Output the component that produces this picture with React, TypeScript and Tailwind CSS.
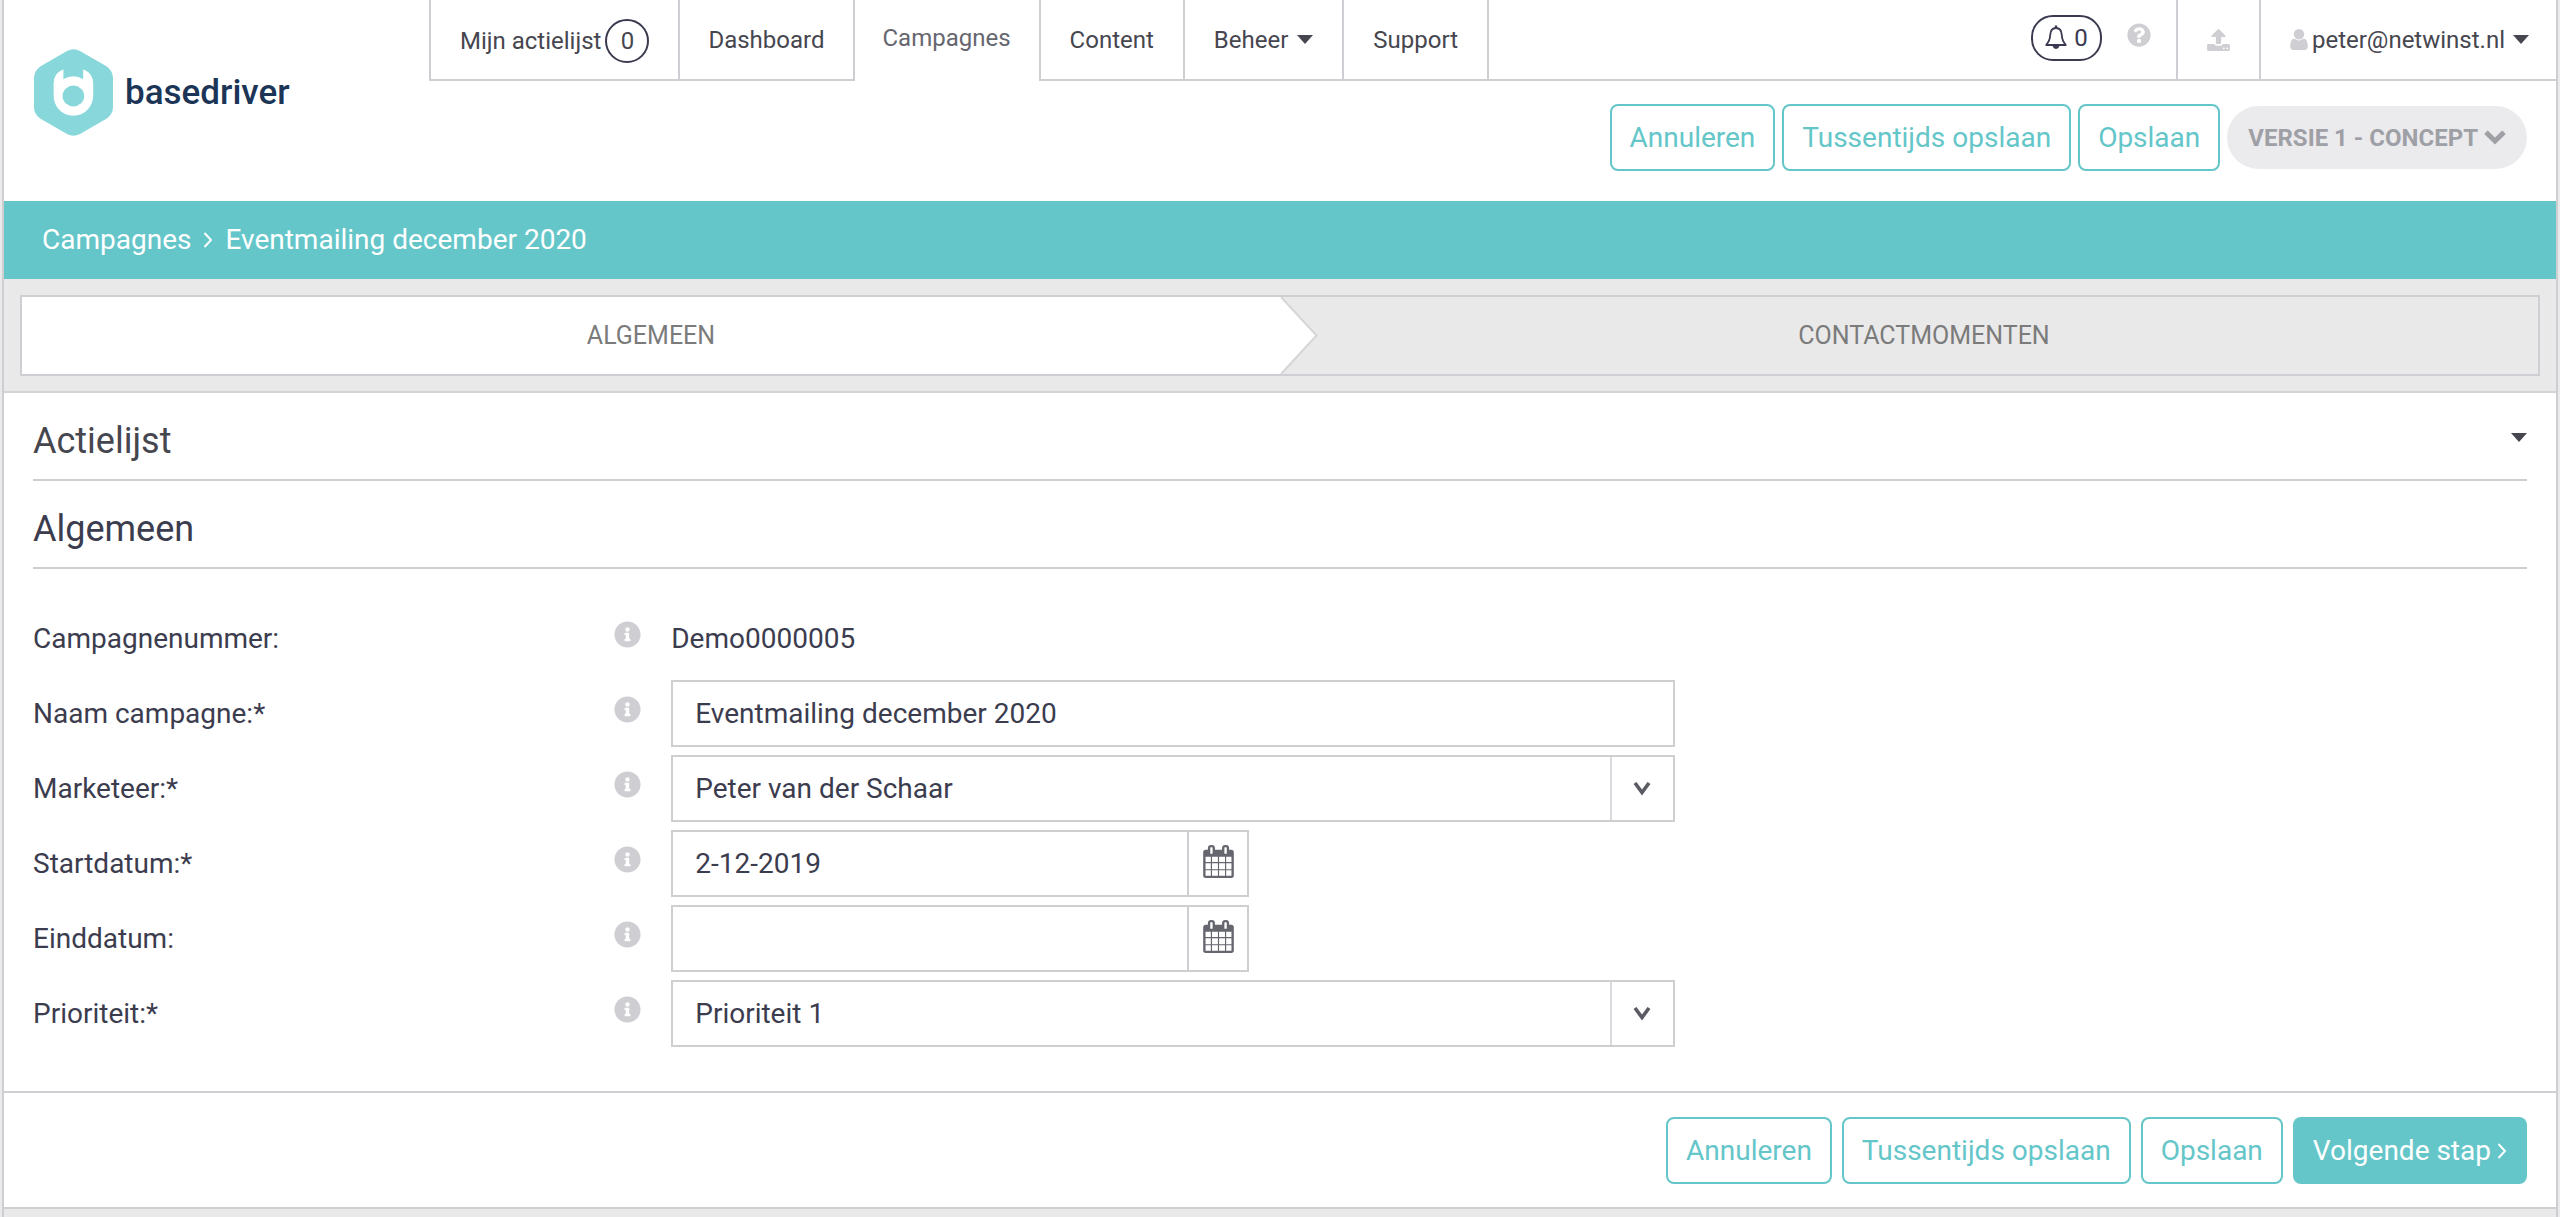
import React from 'react';
import type { ReactNode } from 'react';
import { FaInfoCircle, FaQuestionCircle } from 'react-icons/fa';

function Logo() {
  return (
    <a href="#home" className="flex items-center gap-3 text-[35px] leading-none font-medium text-[#1c3557]">
      <svg viewBox="0 0 79 87" className="h-[87px] w-[79px]" aria-hidden="true">
        <path
          fill="#87d7db"
          d="M33 2Q39.5-1.5 46 2L72 17Q79 21.5 79 29V58Q79 65.5 72 70L46 85Q39.5 88.5 33 85L7 70Q0 65.5 0 58V29Q0 21.5 7 17Z"
        />
        <path
          fill="#fff"
          d="M29.4 20.3V30.3Q34 27.3 39.4 27.3T49.2 30.3V20.3Q59.2 24.5 59.2 34.5V46C59.2 58 50.5 66.7 39.4 66.7S19.6 58 19.6 46V34.5Q19.6 24.5 29.4 20.3Z"
        />
        <ellipse cx="39.4" cy="47" rx="10.8" ry="10.4" fill="#87d7db" />
      </svg>
      basedriver
    </a>
  );
}

function Caret() {
  return (
    <svg viewBox="0 0 16 9" className="h-[9px] w-4 shrink-0" aria-hidden="true">
      <path d="M0 0H16L8 9Z" fill="#46464f" />
    </svg>
  );
}

function ThinChevron() {
  return (
    <svg viewBox="0 0 10 16" className="h-4 w-2.5 shrink-0" fill="none" stroke="currentColor" strokeWidth="2" aria-hidden="true">
      <path d="M1.5 1L8 8L1.5 15" />
    </svg>
  );
}

function BoldChevron() {
  return (
    <svg viewBox="0 0 22 15" className="h-[15px] w-[22px] shrink-0" fill="none" stroke="currentColor" strokeWidth="5" aria-hidden="true">
      <path d="M2 2.200L11 11L20 2.200" />
    </svg>
  );
}

function BellIcon() {
  return (
    <svg viewBox="0 0 22 25" className="h-[25px] w-[22px]" fill="none" stroke="currentColor" strokeWidth="1.8" strokeLinejoin="round" aria-hidden="true">
      <path d="M11 0.5V3" strokeWidth="2.4" />
      <path d="M11 3C7 3 5.4 6.4 5.2 10C5 15 3.6 17.2 1.2 20H20.8C18.4 17.2 17 15 16.8 10C16.6 6.4 15 3 11 3Z" />
      <path d="M8.6 21.2A2.5 2.5 0 0 0 13.4 21.2Z" fill="currentColor" />
    </svg>
  );
}

function UploadIcon() {
  return (
    <svg viewBox="0 60 1664 1604" className="h-[22px] w-[23px]" fill="currentColor" aria-hidden="true">
      <path d="M1280 1472q0-26-19-45t-45-19-45 19-19 45 19 45 45 19 45-19 19-45zm256 0q0-26-19-45t-45-19-45 19-19 45 19 45 45 19 45-19 19-45zm128-224v320q0 40-28 68t-68 28h-1472q-40 0-68-28t-28-68v-320q0-40 28-68t68-28h427q21 56 70.500 92t110.500 36h256q61 0 110.500-36t70.500-92h427q40 0 68 28t28 68zm-325-648q-17 40-59 40h-256v448q0 26-19 45t-45 19h-256q-26 0-45-19t-19-45v-448h-256q-42 0-59-40-17-39 14-69l448-448q18-19 45-19t45 19l448 448q31 30 14 69z" />
    </svg>
  );
}

function UserIcon() {
  return (
    <svg viewBox="256 128 1280 1536" className="h-[21px] w-[18px] shrink-0 text-[#cfcfd3]" fill="currentColor" aria-hidden="true">
      <path d="M1536 1399q0 109-62.500 187t-150.500 78h-854q-88 0-150.500-78t-62.500-187q0-85 8.500-160.500t31.500-152 58.500-131 94-89 134.500-34.500q131 128 313 128t313-128q76 0 134.500 34.500t94 89 58.500 131 31.500 152 8.500 160.500zm-256-887q0 159-112.500 271.500t-271.500 112.500-271.500-112.500-112.500-271.500 112.500-271.500 271.500-112.500 271.500 112.500 112.500 271.500z" />
    </svg>
  );
}

function CalendarIcon() {
  return (
    <svg viewBox="0 0 1664 1792" className="h-[33px] w-[31px] text-[#66666f]" fill="currentColor" aria-hidden="true">
      <path d="M128 1664h288v-288h-288v288zM480 1664h320v-288h-320v288zM128 1312h288v-320h-288v320zM480 1312h320v-320h-320v320zM128 928h288v-288h-288v288zM864 1664h320v-288h-320v288zM480 928h320v-288h-320v288zM1248 1664h288v-288h-288v288zM864 1312h320v-320h-320v320zM512 448v-288q0-13-9.500-22.500t-22.500-9.500h-64q-13 0-22.500 9.500t-9.500 22.500v288q0 13 9.500 22.500t22.500 9.500h64q13 0 22.500-9.500t9.500-22.500zM1248 1312h288v-320h-288v320zM864 928h320v-288h-320v288zM1248 928h288v-288h-288v288zM1280 448v-288q0-13-9.500-22.500t-22.500-9.500h-64q-13 0-22.500 9.500t-9.500 22.500v288q0 13 9.500 22.500t22.500 9.500h64q13 0 22.500-9.500t9.500-22.500zM1664 384v1280q0 52-38 90t-90 38h-1408q-52 0-90-38t-38-90v-1280q0-52 38-90t90-38h128v-96q0-66 47-113t113-47h64q66 0 113 47t47 113v96h384v-96q0-66 47-113t113-47h64q66 0 113 47t47 113v96h128q52 0 90 38t38 90z" />
    </svg>
  );
}

const tab = 'flex items-center border-l-2 border-[#cfcfd3]';

function TopNav() {
  return (
    <nav className="flex h-[81px] text-2xl whitespace-nowrap text-[#46464f]">
      <a href="#actielijst" className={`${tab} gap-1 border-b-2 px-[29px] pt-[3px]`}>
        Mijn actielijst
        <span className="flex size-11 items-center justify-center rounded-full border-2 border-[#3a3a50]">0</span>
      </a>
      <a href="#dashboard" className={`${tab} border-b-2 px-7`}>Dashboard</a>
      <a href="#campagnes" aria-current="page" className={`${tab} px-7 pb-1.5 text-[#66666f]`}>Campagnes</a>
      <a href="#content" className={`${tab} border-b-2 px-[29px]`}>Content</a>
      <button type="button" className={`${tab} gap-[9px] border-b-2 px-[29px]`}>
        Beheer
        <Caret />
      </button>
      <a href="#support" className={`${tab} border-r-2 border-b-2 px-[29px]`}>Support</a>
      <div className="flex flex-1 items-center justify-end gap-[25px] border-b-2 border-[#cfcfd3] pr-[25px] pb-1">
        <button type="button" aria-label="Meldingen" className="flex h-[46px] w-[71px] items-center justify-center gap-[7px] rounded-[22px] border-2 border-[#3a3a50] text-[#3a3a50]">
          <BellIcon />
          0
        </button>
        <button type="button" aria-label="Help" className="pb-1.5 text-[#cfcfd3]">
          <FaQuestionCircle className="size-6" />
        </button>
      </div>
      <button type="button" aria-label="Uploaden" className={`${tab} border-b-2 px-[29px] text-[#cfcfd3]`}>
        <UploadIcon />
      </button>
      <button type="button" className={`${tab} border-b-2 pr-[27px] pl-[29px]`}>
        <UserIcon />
        <span className="mr-2 ml-1">peter@netwinst.nl</span>
        <Caret />
      </button>
    </nav>
  );
}

function OutlineButton({ children }: { children: ReactNode }) {
  return (
    <button type="button" className="h-[67px] rounded-lg border-2 border-[#64c6c9] bg-white px-[18px] text-[28px] whitespace-nowrap text-[#64c6c9]">
      {children}
    </button>
  );
}

function Header() {
  return (
    <header className="flex h-[201px]">
      <div className="w-[425px] shrink-0 pt-[49px] pl-[30px]">
        <Logo />
      </div>
      <div className="flex-1">
        <TopNav />
        <div className="flex items-center justify-end gap-[7px] pt-[23px] pr-[29px]">
          <OutlineButton>Annuleren</OutlineButton>
          <OutlineButton>Tussentijds opslaan</OutlineButton>
          <OutlineButton>Opslaan</OutlineButton>
          <button type="button" className="flex h-[63px] items-center gap-1.5 rounded-full bg-[#ebebed] px-[21px] text-2xl font-bold whitespace-nowrap text-[#9f9fa6]">
            VERSIE 1 - CONCEPT
            <BoldChevron />
          </button>
        </div>
      </div>
    </header>
  );
}

function Steps() {
  return (
    <div className="border-b-2 border-[#d3d3d5] bg-[#e9e9e9] px-4 pt-4 pb-[15px]">
      <ol className="grid h-[81px] grid-cols-2 border-2 border-[#cfcfd3] text-[25px] text-[#7b7b7b]">
        <li className="relative flex items-center justify-center bg-white">
          <a href="#algemeen" aria-current="step">ALGEMEEN</a>
          <svg viewBox="0 0 38 77" preserveAspectRatio="none" className="absolute top-0 left-full h-full w-[38px]" aria-hidden="true">
            <path d="M0 0H1L36.500 38.500L1 77H0Z" fill="#fff" />
            <path d="M1 0L36.500 38.500L1 77" fill="none" stroke="#d6d6d8" strokeWidth="2" />
          </svg>
        </li>
        <li className="flex items-center justify-center pl-[30px]">
          <a href="#contactmomenten">CONTACTMOMENTEN</a>
        </li>
      </ol>
    </div>
  );
}

function Row({ label, id, children }: { label: string; id: string; children: ReactNode }) {
  return (
    <div className="grid min-h-[67px] grid-cols-[581fr_57px_1003fr_852fr] items-center">
      <label htmlFor={id}>{label}</label>
      <button type="button" aria-label={`Uitleg bij ${label}`} className="pb-2 text-[#cfcfd3]">
        <FaInfoCircle className="size-[27px]" />
      </button>
      {children}
    </div>
  );
}

function SelectField({ id, options }: { id: string; options: string[] }) {
  return (
    <div className="relative">
      <select id={id} className="block h-[67px] w-full appearance-none border-2 border-[#cfcfcf] bg-white pr-20 pl-[22px]">
        {options.map((o) => (
          <option key={o}>{o}</option>
        ))}
      </select>
      <span className="pointer-events-none absolute inset-y-0.5 right-0.5 flex w-[63px] items-center justify-center border-l-2 border-[#d9d9df]">
        <svg viewBox="0 0 18 14" className="h-3.5 w-[18px]" fill="none" stroke="#5b5b64" strokeWidth="3.6" aria-hidden="true">
          <path d="M2 1L9 10.500L16 1" />
        </svg>
      </span>
    </div>
  );
}

function DateField({ id, value }: { id: string; value: string }) {
  return (
    <div className="flex h-[67px] w-[578px] max-w-full border-2 border-[#cfcfcf]">
      <input id={id} type="text" defaultValue={value} className="min-w-0 flex-1 pl-[22px] outline-none" />
      <button type="button" aria-label="Kies een datum" className="flex w-[60px] items-center justify-center border-l-2 border-[#cfcfd3] pb-1">
        <CalendarIcon />
      </button>
    </div>
  );
}

function CampaignForm() {
  return (
    <form className="flex flex-col gap-2 pt-9 pb-11 text-[28px] text-[#3c3c4f]">
      <Row label="Campagnenummer:" id="nummer">
        <output id="nummer">Demo0000005</output>
      </Row>
      <Row label="Naam campagne:*" id="naam">
        <input id="naam" type="text" defaultValue="Eventmailing december 2020" className="h-[67px] w-full border-2 border-[#cfcfcf] px-[22px]" />
      </Row>
      <Row label="Marketeer:*" id="marketeer">
        <SelectField id="marketeer" options={['Peter van der Schaar']} />
      </Row>
      <Row label="Startdatum:*" id="start">
        <DateField id="start" value="2-12-2019" />
      </Row>
      <Row label="Einddatum:" id="eind">
        <DateField id="eind" value="" />
      </Row>
      <Row label="Prioriteit:*" id="prioriteit">
        <SelectField id="prioriteit" options={['Prioriteit 1']} />
      </Row>
    </form>
  );
}

export default function App() {
  return (
    <div className="min-h-screen bg-[#e9e9e9] px-0.5 font-[Roboto,sans-serif]">
      <div className="min-h-screen border-x-2 border-[#cfcfd3]">
        <div className="border-b-2 border-[#cfcfd3] bg-white">
          <Header />
          <div className="flex h-[78px] items-center gap-3 bg-[#64c6c9] pl-[38px] text-[28px] text-white">
            <a href="#campagnes">Campagnes</a>
            <ThinChevron />
            <span>Eventmailing december 2020</span>
          </div>
          <Steps />
          <main className="px-[29px]">
            <button type="button" className="flex w-full items-center justify-between border-b-2 border-[#cfcfd3] pt-6 pb-3.5 text-left text-[#46464f]">
              <span className="text-4xl leading-[48px]">Actielijst</span>
              <span className="pb-2">
                <Caret />
              </span>
            </button>
            <h2 className="border-b-2 border-[#cfcfd3] pt-6 pb-3.5 text-4xl leading-[48px] text-[#3c3c4f]">Algemeen</h2>
            <CampaignForm />
          </main>
          <footer className="flex justify-end gap-2.5 border-t-2 border-[#cfcfd3] pt-6 pr-[29px] pb-[23px]">
            <OutlineButton>Annuleren</OutlineButton>
            <OutlineButton>Tussentijds opslaan</OutlineButton>
            <OutlineButton>Opslaan</OutlineButton>
            <button type="button" className="flex h-[67px] items-center gap-1.5 rounded-lg bg-[#64c6c9] px-5 text-[28px] whitespace-nowrap text-white">
              Volgende stap
              <ThinChevron />
            </button>
          </footer>
        </div>
      </div>
    </div>
  );
}
